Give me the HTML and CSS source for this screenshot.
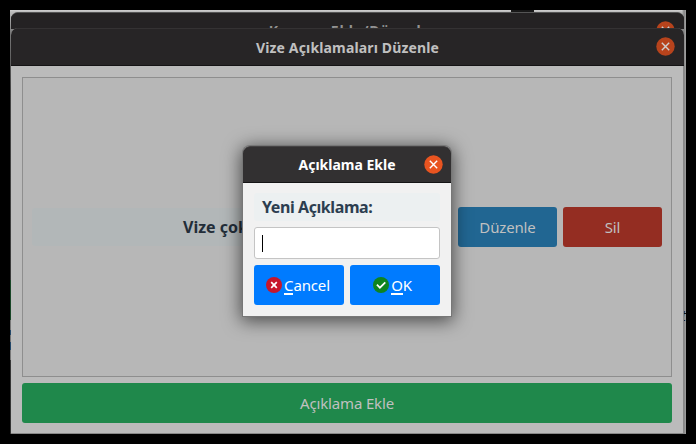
FILE: index.html
```html
<!DOCTYPE html>
<html lang="tr">
<head>
<meta charset="utf-8">
<title>Vize Açıklamaları Düzenle</title>
<link rel="stylesheet" href="styles.css">
</head>
<body>
<div class="desktop">
  <span class="peek peek-dark"></span>
  <span class="peek peek-left"></span>
  <span class="peek peek-text">t</span>
  <div class="window back">
    <header class="titlebar"><span class="title title-back">Kavram Ekle/Düzenle</span>
      <svg class="close" viewBox="0 0 19 19"><circle cx="9.5" cy="9.5" r="9.2"/><path d="M5.8 5.8l7.4 7.4M13.2 5.8l-7.4 7.4"/></svg>
    </header>
  </div>
  <div class="window front">
    <header class="titlebar"><span class="title title-front">Vize Açıklamaları Düzenle</span>
      <svg class="close" viewBox="0 0 19 19"><circle cx="9.5" cy="9.5" r="9.2"/><path d="M5.8 5.8l7.4 7.4M13.2 5.8l-7.4 7.4"/></svg>
    </header>
    <main class="content">
      <section class="list">
        <div class="row">
          <div class="row-label"><span>Vize çok</span></div>
          <button class="btn edit"><span>Düzenle</span></button>
          <button class="btn delete"><span>Sil</span></button>
        </div>
      </section>
      <button class="btn add"><span>Açıklama Ekle</span></button>
    </main>
  </div>
</div>
<div class="dialog">
  <header class="titlebar"><span class="title title-dialog">Açıklama Ekle</span>
    <svg class="close" viewBox="0 0 19 19"><circle cx="9.5" cy="9.5" r="9.2"/><path d="M5.8 5.8l7.4 7.4M13.2 5.8l-7.4 7.4"/></svg>
  </header>
  <div class="form">
    <div class="form-label"><span>Yeni Açıklama:</span></div>
    <div class="field"><i class="caret"></i></div>
    <div class="actions">
      <button class="btn primary"><svg class="icon" viewBox="0 0 16 16"><circle cx="8" cy="8" r="8" fill="#c7162b"/><path d="M5.2 5.2l5.6 5.6M10.8 5.2l-5.6 5.6"/></svg><span class="cancel"><u>C</u>ancel</span></button>
      <button class="btn primary accept"><svg class="icon" viewBox="0 0 16 16"><circle cx="8" cy="8" r="8" fill="#0e8420"/><path d="M3.9 7.7l3 3 5.4-5.4"/></svg><span class="ok"><u>O</u>K</span></button>
    </div>
  </div>
</div>
</body>
</html>
```
FILE: styles.css
```css
* { box-sizing: border-box; }
body {
  margin: 0;
  width: 696px;
  height: 444px;
  padding: 10px;
  overflow: hidden;
  background: #000;
  font-family: "Noto Sans", "Open Sans", sans-serif;
}
.desktop {
  position: relative;
  width: 676px;
  height: 424px;
  padding: 2px 2px 0 1px;
  overflow: hidden;
  background: linear-gradient(90deg, transparent 4px, transparent 672px, #858585 674px, #a2a2a2),
    linear-gradient(#d0d0d0 0, #b9b9b9 2px, #777 24px, #444 80px, #333);
}
.window { border-radius: 7px 7px 0 0; overflow: hidden; }
.back { height: 17px; background: #242223; border-top: 1px solid #555; }
.front {
  height: 406px;
  margin-top: -1px;
  position: relative;
  background: #bbb;
  display: flex;
  flex-direction: column;
}
.front::after {
  content: "";
  position: absolute;
  inset: 38px 0 0;
  border: solid #888;
  border-width: 0 1px 1px 0;
}
.titlebar {
  height: 38px;
  flex: none;
  display: flex;
  align-items: center;
  justify-content: center;
  position: relative;
  background: #272526;
  border-top: 1px solid #343233;
  border-bottom: 1px solid #151415;
  color: #c0c0c0;
  font-size: 14px;
  font-weight: 700;
}
.back .titlebar { height: 35px; border: 0; background: #242223; color: #929292; }
.title { white-space: nowrap; line-height: 20px; }
.title-front { letter-spacing: .15px; position: relative; top: 1px; }
.title-back { letter-spacing: .7px; padding-left: 4px; }
.close {
  position: absolute;
  top: 8px;
  right: 9.5px;
  width: 19px;
  height: 19px;
  fill: #b7431c;
  stroke: none;
}
.close path { stroke: #d0d0d0; stroke-width: 1.4; fill: none; }
.content { flex: 1; padding: 11px 12px 11px 11px; display: flex; flex-direction: column; gap: 6px; }
.list {
  flex: 1;
  display: flex;
  align-items: center;
  border: 1px solid #8e8e8e;
  background: #b7b7b7;
  padding: 0 9px;
}
.row { display: flex; align-items: center; gap: 6px; width: 100%; height: 40px; }
.row-label {
  flex: 1;
  height: 38px;
  display: flex;
  align-items: center;
  padding-left: 151px;
  border-radius: 3px;
  background: linear-gradient(90deg, #b2b7b8 230px, #b7b7b7 231px);
  color: #222d38;
  font-size: 16px;
  font-weight: 700;
}
.btn {
  border: 0;
  border-radius: 3px;
  padding: 0;
  height: 40px;
  font: 15px "Noto Sans", "Open Sans", sans-serif;
  letter-spacing: -.15px;
  color: #c0c0c0;
  display: flex;
  align-items: center;
  justify-content: center;
}
.edit, .delete { width: 99px; }
.edit { background: #216692; }
.delete { background: #942d22; }
.add { background: #1f884b; }
.dialog {
  position: absolute;
  left: 243px;
  top: 146px;
  width: 208px;
  height: 170px;
  border-radius: 7px 7px 0 0;
  background: #f1f1f1;
  box-shadow: 0 0 0 1px #777, 0 3px 18px 2px rgba(0, 0, 0, .6);
}
.dialog .titlebar {
  height: 37px;
  border-radius: 7px 7px 0 0;
  background: #323031;
  border-top-color: #454344;
  color: #fff;
}
.dialog .close { top: 7.5px; right: 8.5px; fill: #e95420; }
.dialog .close path { stroke: #fff; }
.form { padding: 10px 11px; display: flex; flex-direction: column; }
.form-label {
  height: 28px;
  border-radius: 3px;
  background: #ecf0f1;
  color: #2c3e50;
  font-size: 16px;
  font-weight: 700;
  letter-spacing: -.42px;
  padding-left: 8px;
  display: flex;
  align-items: center;
}
.field {
  height: 32px;
  margin: 6px 0;
  border: 1px solid #c4c4c4;
  border-radius: 3px;
  background: #fff;
  padding: 7px;
}
.caret { display: block; width: 1px; height: 17px; background: #000; }
.actions { display: flex; gap: 6px; }
.primary { width: 90px; background: #007bff; color: #fff; padding-right: 2px; }
.accept { padding-right: 5px; }
.primary u { text-decoration: none; border-bottom: 2px solid #fff; line-height: 15px; display: inline-block; }
.icon { width: 16px; height: 16px; margin: 0 2px 0 0; fill: none; }
.icon path { stroke: #fff; stroke-width: 1.7; }
.peek { position: absolute; }
.peek-dark { left: 501px; top: 0; width: 23px; height: 2px; background: #181818; }
.peek-left {
  left: 0;
  top: 270px;
  width: 1px;
  height: 80px;
  background: linear-gradient(#184526 40px, #777 40px 50px, #234768 50px 55px, #777 55px 62px, #234768 62px 70px, #777 70px);
}
.peek-text { left: 671px; top: 295px; font-size: 15px; font-style: italic; color: #111; }
```
